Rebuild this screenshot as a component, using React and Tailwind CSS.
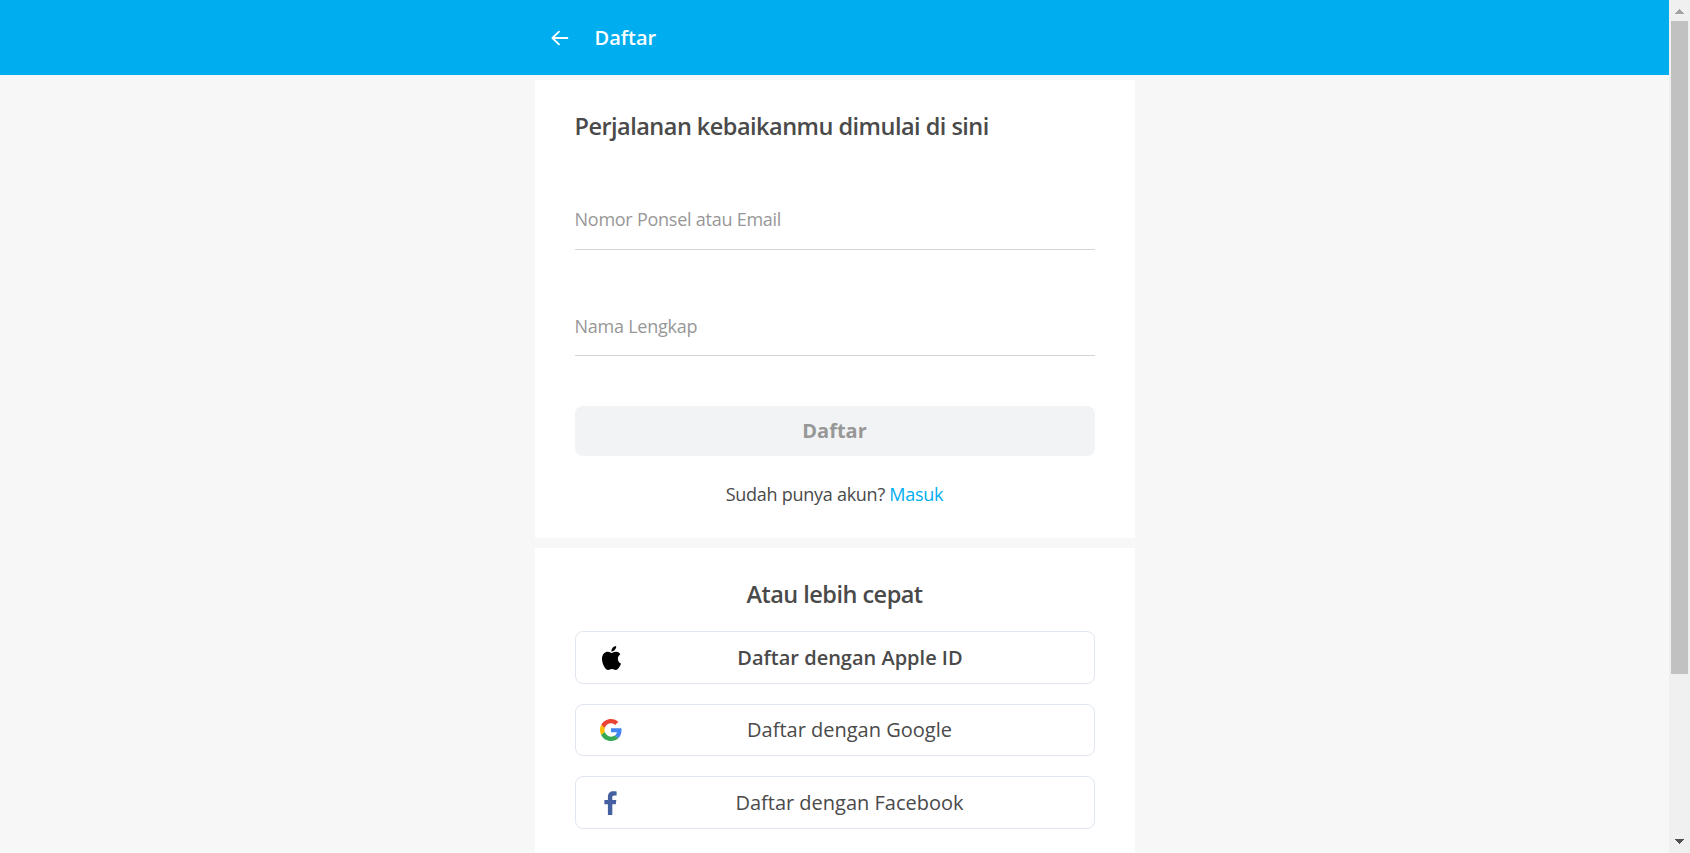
import React from "react";

function BackIcon() {
  return (
    <svg width="24" height="24" viewBox="0 0 24 24" fill="none" stroke="#fff" strokeWidth="1.8" strokeLinecap="round" strokeLinejoin="round">
      <path d="M19.4 12H4.4M11 5.6L4.4 12l6.6 6.4" />
    </svg>
  );
}

function AppleIcon() {
  return (
    <svg className="h-[24px] w-[19px]" viewBox="0 0 814 1000" preserveAspectRatio="none">
      <path d="M788.1 340.9c-5.8 4.5-108.2 62.2-108.2 190.5 0 148.4 130.3 200.9 134.2 202.2-.6 3.2-20.7 71.9-68.7 141.9-42.8 61.6-87.5 123.1-155.5 123.1s-85.5-39.5-164-39.5c-76.5 0-103.7 40.8-165.9 40.8s-105.6-57-155.5-127C46.7 790.7 0 663 0 541.8c0-194.4 126.4-297.5 250.8-297.5 66.1 0 121.2 43.4 162.7 43.4 39.5 0 101.1-46 176.3-46 28.5 0 130.9 2.6 198.3 99.2zm-234-181.500c31.100-36.900 53.100-88.100 53.100-139.300 0-7.100-.6-14.300-1.900-20.100-50.600 1.900-110.800 33.700-147.100 75.800-28.500 32.400-55.100 83.600-55.100 135.500 0 7.800 1.300 15.600 1.900 18.100 3.200.6 8.400 1.300 13.600 1.300 45.400 0 102.500-30.400 135.500-71.300z" />
    </svg>
  );
}

function GoogleIcon() {
  return (
    <svg className="h-[22px] w-[22px]" viewBox="0 0 48 48" preserveAspectRatio="none">
      <path fill="#EA4335" d="M24 9.5c3.54 0 6.71 1.22 9.21 3.6l6.85-6.85C35.9 2.38 30.47 0 24 0 14.62 0 6.51 5.38 2.56 13.22l7.98 6.19C12.43 13.72 17.74 9.5 24 9.5z" />
      <path fill="#4285F4" d="M46.98 24.55c0-1.57-.15-3.09-.38-4.55H24v9.02h12.94c-.58 2.96-2.26 5.48-4.78 7.18l7.73 6c4.51-4.18 7.09-10.36 7.09-17.65z" />
      <path fill="#FBBC05" d="M10.53 28.59c-.48-1.45-.76-2.99-.76-4.59s.27-3.14.76-4.59l-7.98-6.19C.92 16.46 0 20.12 0 24c0 3.88.92 7.54 2.56 10.78l7.97-6.19z" />
      <path fill="#34A853" d="M24 48c6.48 0 11.93-2.13 15.89-5.81l-7.73-6c-2.15 1.45-4.92 2.3-8.16 2.3-6.26 0-11.57-4.22-13.47-9.91l-7.98 6.19C6.51 42.62 14.62 48 24 48z" />
    </svg>
  );
}

function FacebookIcon() {
  return (
    <svg className="h-[24px] w-[13px]" viewBox="0 0 13 24">
      <path fill="#4460a0" d="M3.9 24V13.2H.4V9h3.5V6C3.9 2.3 6 .3 9.3.3c1.5 0 2.9.1 3.3.2v4H10.4c-1.7 0-2.1.8-2.1 2V9h4l-.5 4.2H8.3V24z" />
    </svg>
  );
}

function Field({ label, className }) {
  return (
    <div className={`flex flex-col justify-end border-b border-[#d4d4d4] text-[18px] leading-[28px] tracking-[-0.25px] text-[#979797] ${className}`}>
      <span>{label}</span>
    </div>
  );
}

function SocialButton({ icon, label, className, iconClass }) {
  return (
    <button className={`flex shrink-0 items-center rounded-[8px] border border-[#e1e7f0] bg-white text-[20px] text-[#4a4a4a] ${className}`}>
      <span className={`flex justify-center ${iconClass}`}>{icon}</span>
      <span className="flex-1 pr-[25px] text-center">{label}</span>
    </button>
  );
}

export default function App() {
  return (
    <div className="flex h-[853px] w-[1690px] overflow-hidden bg-[#f7f7f7] font-['Open_Sans',sans-serif] text-[#4a4a4a]">
      <div className="flex w-[1669px] flex-col">
        <header className="flex h-[75px] shrink-0 justify-center bg-[#00aef0]">
          <div className="flex w-[600px] items-center pl-[13px]">
            <BackIcon />
            <h1 className="ml-[23px] text-[20px] leading-[28px] font-semibold text-white">Daftar</h1>
          </div>
        </header>
        <main className="mx-auto flex w-[600px] flex-col gap-[10px] pt-[5px]">
          <section className="flex h-[458px] shrink-0 flex-col bg-white px-10 pt-[29px]">
            <h2 className="text-[23.5px] leading-[34px] font-semibold tracking-[-0.52px]">Perjalanan kebaikanmu dimulai di sini</h2>
            <Field label="Nomor Ponsel atau Email" className="h-[107px] pb-[16px]" />
            <Field label="Nama Lengkap" className="h-[106px] pb-[15px]" />
            <button className="mt-[50px] h-[50px] rounded-[8px] bg-[#f1f3f5] text-[20px] font-bold text-[#979797]">Daftar</button>
            <p className="mt-[24px] text-center text-[18px] leading-[28px] tracking-[-0.27px]">
              Sudah punya akun? <a className="text-[#00aef0]">Masuk</a>
            </p>
          </section>
          <section className="flex h-[305px] shrink-0 flex-col bg-white px-10 pt-[29px]">
            <h2 className="text-center text-[23.5px] leading-[34px] font-semibold tracking-[-0.52px]">Atau lebih cepat</h2>
            <SocialButton icon={<AppleIcon />} label="Daftar dengan Apple ID" className="mt-[20px] h-[53px] font-semibold" iconClass="ml-[16px] w-[40px]" />
            <SocialButton icon={<GoogleIcon />} label="Daftar dengan Google" className="mt-[20px] h-[52px]" iconClass="ml-[15px] w-[40px]" />
            <SocialButton icon={<FacebookIcon />} label="Daftar dengan Facebook" className="mt-[20px] h-[53px]" iconClass="ml-[15px] w-[40px]" />
          </section>
        </main>
      </div>
      <div className="flex w-[21px] flex-col items-center bg-[#f0f0f0]">
        <svg className="h-[21px] w-[21px] shrink-0" viewBox="0 0 21 21" shapeRendering="crispEdges">
          <path d="M6 14h9L10.5 9z" fill="#a3a3a3" />
        </svg>
        <div className="h-[653px] w-[17px] bg-[#c1c1c1]" />
        <svg className="mt-auto h-[21px] w-[21px] shrink-0" viewBox="0 0 21 21" shapeRendering="crispEdges">
          <path d="M6 7h9l-4.5 5z" fill="#505050" />
        </svg>
      </div>
    </div>
  );
}
